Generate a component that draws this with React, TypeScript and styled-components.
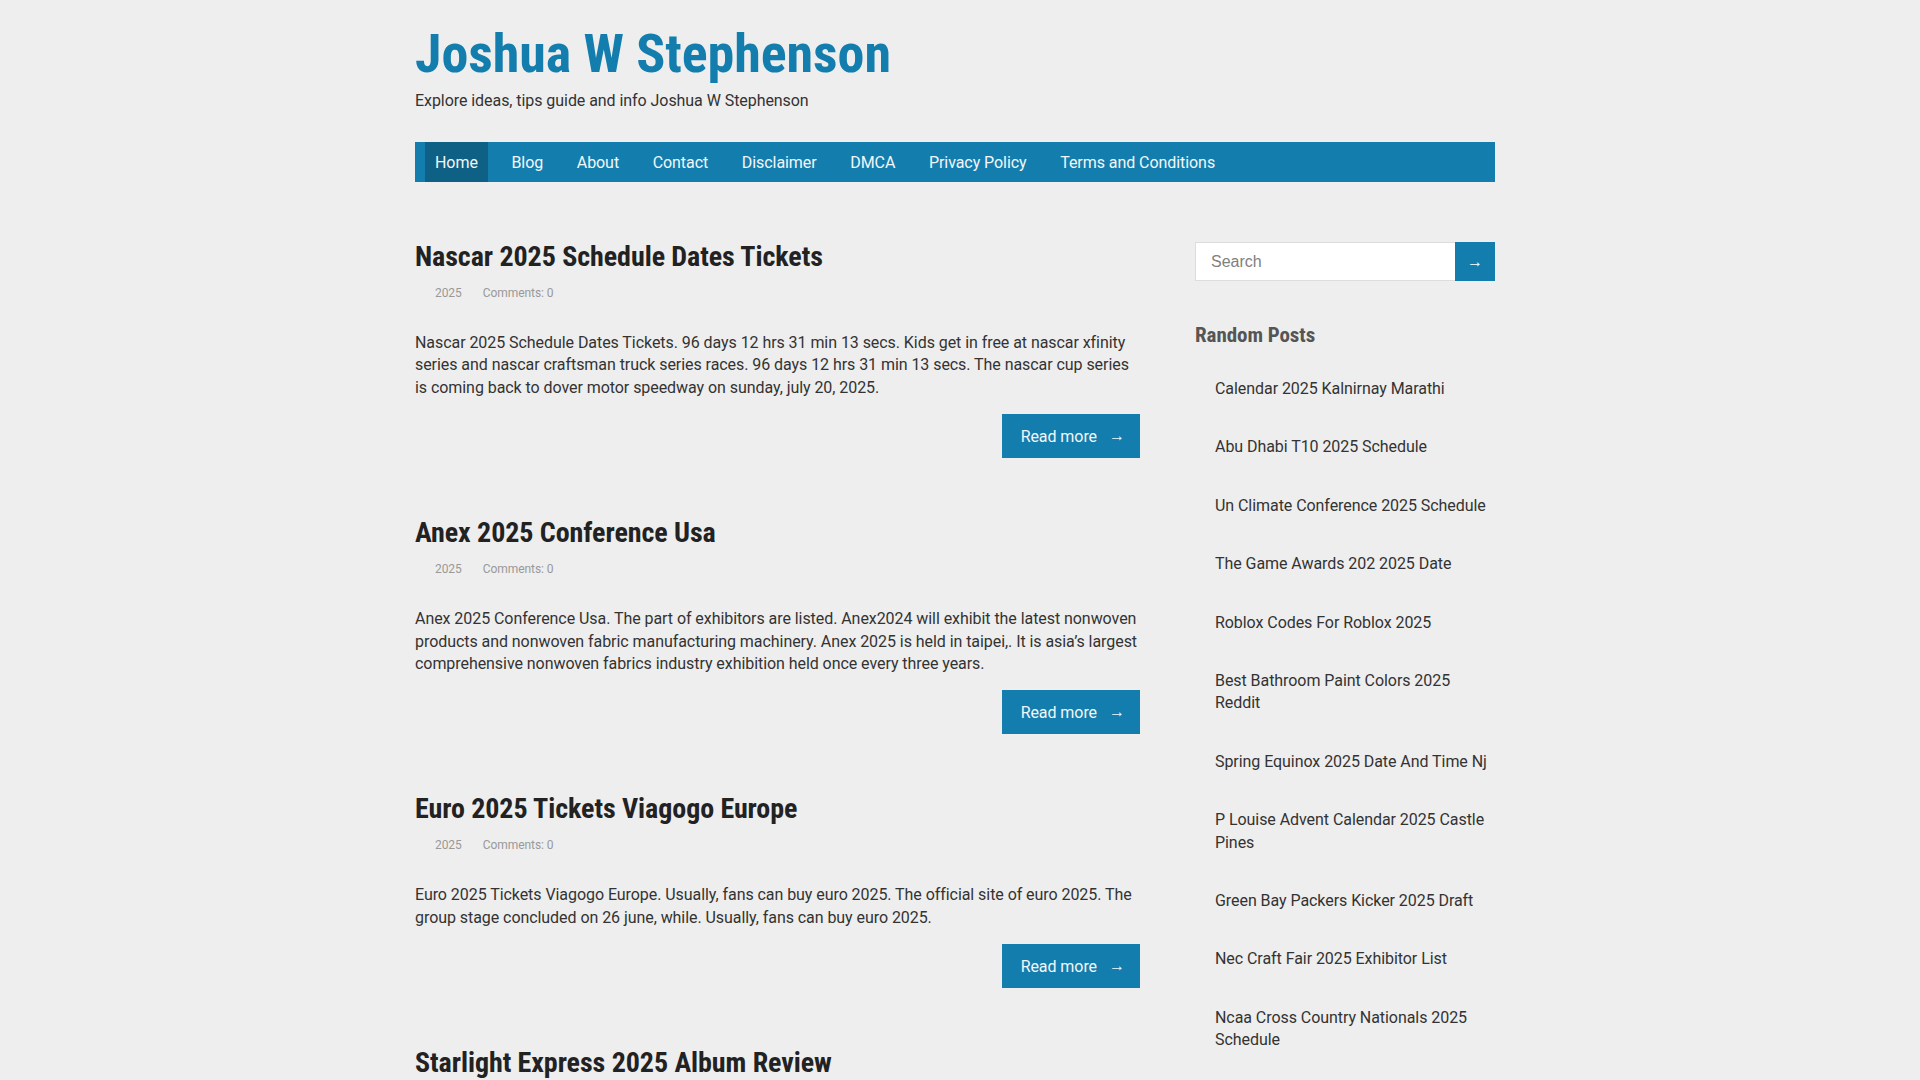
import styled, { createGlobalStyle } from "styled-components";

const GlobalStyle = createGlobalStyle`
  html, body {
    margin: 0;
    padding: 0;
    background: #eeeeee;
    font-family: Roboto, "Noto Sans", sans-serif;
    letter-spacing: -0.06px;
    color: #333;
  }
  * { box-sizing: border-box; }
  ul { margin: 0; padding: 0; list-style: none; }
`;

const blue = "#137eae";
const headingFont = `"Roboto Condensed", Roboto, sans-serif`;

const posts = [
  {
    title: "Nascar 2025 Schedule Dates Tickets",
    text: "Nascar 2025 Schedule Dates Tickets. 96 days 12 hrs 31 min 13 secs. Kids get in free at nascar xfinity series and nascar craftsman truck series races. 96 days 12 hrs 31 min 13 secs. The nascar cup series is coming back to dover motor speedway on sunday, july 20, 2025.",
  },
  {
    title: "Anex 2025 Conference Usa",
    text: "Anex 2025 Conference Usa. The part of exhibitors are listed. Anex2024 will exhibit the latest nonwoven products and nonwoven fabric manufacturing machinery. Anex 2025 is held in taipei,. It is asia’s largest comprehensive nonwoven fabrics industry exhibition held once every three years.",
  },
  {
    title: "Euro 2025 Tickets Viagogo Europe",
    text: "Euro 2025 Tickets Viagogo Europe. Usually, fans can buy euro 2025. The official site of euro 2025. The group stage concluded on 26 june, while. Usually, fans can buy euro 2025.",
  },
  {
    title: "Starlight Express 2025 Album Review",
    text: "Starlight Express 2025 Album Review. The new cast recording brings the roller skating musical back with fresh arrangements and a new generation of performers.",
  },
];

const randomPosts = [
  "Calendar 2025 Kalnirnay Marathi",
  "Abu Dhabi T10 2025 Schedule",
  "Un Climate Conference 2025 Schedule",
  "The Game Awards 202 2025 Date",
  "Roblox Codes For Roblox 2025",
  "Best Bathroom Paint Colors 2025 Reddit",
  "Spring Equinox 2025 Date And Time Nj",
  "P Louise Advent Calendar 2025 Castle Pines",
  "Green Bay Packers Kicker 2025 Draft",
  "Nec Craft Fair 2025 Exhibitor List",
  "Ncaa Cross Country Nationals 2025 Schedule",
];

const navItems = ["Home", "Blog", "About", "Contact", "Disclaimer", "DMCA", "Privacy Policy", "Terms and Conditions"];

const Page = styled.div`
  padding-right: 10px;
`;

const Container = styled.div`
  width: 1080px;
  margin: 0 auto;
`;

const Header = styled.header`
  padding-top: 23px;
`;

const SiteTitle = styled.h1`
  margin: 0;
  font-family: ${headingFont};
  font-weight: 700;
  font-size: 54px;
  line-height: 62px;
  color: ${blue};
`;

const Tagline = styled.p`
  margin: 5px 0 0;
  font-size: 16px;
  line-height: 22px;
  color: #333;
`;

const Nav = styled.nav`
  margin-top: 30px;
  height: 40px;
  background: ${blue};
  padding: 0 10px;
`;

const NavList = styled.ul`
  display: flex;
  gap: 13.6px;
  height: 100%;
`;

const NavItem = styled.li<{ $active?: boolean }>`
  display: flex;
  align-items: center;
  padding: 0 10px;
  height: 100%;
  font-size: 16px;
  color: #f2f6f9;
  background: ${(p) => (p.$active ? "#0e6085" : "transparent")};
  cursor: pointer;
`;

const Layout = styled.div`
  display: flex;
  align-items: flex-start;
  gap: 55px;
`;

const Content = styled.main`
  width: 725px;
  padding-top: 57px;
`;

const Post = styled.article`
  display: flex;
  flex-direction: column;
  margin-bottom: 57px;
`;

const PostTitle = styled.h2`
  margin: 0;
  font-family: ${headingFont};
  font-weight: 700;
  font-size: 28px;
  line-height: 36px;
  color: #222;
`;

const Meta = styled.div`
  display: flex;
  gap: 21px;
  margin-top: 9px;
  padding-left: 20px;
  font-size: 12px;
  line-height: 18px;
  color: #999;
`;

const Excerpt = styled.p`
  margin: 30px 0 0;
  font-size: 16px;
  line-height: 22.4px;
  color: #333;
`;

const ReadMore = styled.a`
  align-self: flex-end;
  display: flex;
  align-items: center;
  margin-top: 15px;
  height: 44px;
  padding: 0 15px 0 19px;
  background: ${blue};
  color: #f2f6f9;
  font-size: 16px;
  text-decoration: none;
  cursor: pointer;
`;

const Arrow = styled.span`
  margin-left: 12px;
  font-size: 16px;
  line-height: 1;
`;

const Sidebar = styled.aside`
  width: 300px;
  margin-top: 60px;
`;

const SearchForm = styled.form`
  display: flex;
  height: 39px;
`;

const SearchInput = styled.input`
  flex: 1;
  min-width: 0;
  border: 1px solid #dddddd;
  border-right: none;
  background: #fff;
  padding: 0 15px;
  font-family: "Liberation Sans", Arial, sans-serif;
  font-size: 16px;
  color: #333;
  outline: none;
  &::placeholder { color: #808080; }
`;

const SearchButton = styled.button`
  width: 40px;
  border: none;
  background: ${blue};
  color: #fff;
  font-family: Roboto, sans-serif;
  font-size: 16px;
  padding: 0;
  cursor: pointer;
`;

const WidgetTitle = styled.h3`
  margin: 39px 0 0;
  font-family: ${headingFont};
  font-weight: 700;
  font-size: 21px;
  line-height: 30px;
  color: #555;
`;

const PostList = styled.ul`
  margin-top: 10px;
`;

const PostLink = styled.li`
  padding: 18px 0 18px 20px;
  font-size: 16px;
  line-height: 22.4px;
  color: #333;
  cursor: pointer;
`;

export default function App() {
  return (
    <Page>
      <GlobalStyle />
      <Container>
        <Header>
          <SiteTitle>Joshua W Stephenson</SiteTitle>
          <Tagline>Explore ideas, tips guide and info Joshua W Stephenson</Tagline>
        </Header>
        <Nav>
          <NavList>
            {navItems.map((item, i) => (
              <NavItem key={item} $active={i === 0}>
                {item}
              </NavItem>
            ))}
          </NavList>
        </Nav>
        <Layout>
          <Content>
            {posts.map((post) => (
              <Post key={post.title}>
                <PostTitle>{post.title}</PostTitle>
                <Meta>
                  <span>2025</span>
                  <span>Comments: 0</span>
                </Meta>
                <Excerpt>{post.text}</Excerpt>
                <ReadMore>
                  Read more<Arrow>→</Arrow>
                </ReadMore>
              </Post>
            ))}
          </Content>
          <Sidebar>
            <SearchForm onSubmit={(e) => e.preventDefault()}>
              <SearchInput placeholder="Search" />
              <SearchButton type="submit">→</SearchButton>
            </SearchForm>
            <WidgetTitle>Random Posts</WidgetTitle>
            <PostList>
              {randomPosts.map((p) => (
                <PostLink key={p}>{p}</PostLink>
              ))}
            </PostList>
          </Sidebar>
        </Layout>
      </Container>
    </Page>
  );
}
